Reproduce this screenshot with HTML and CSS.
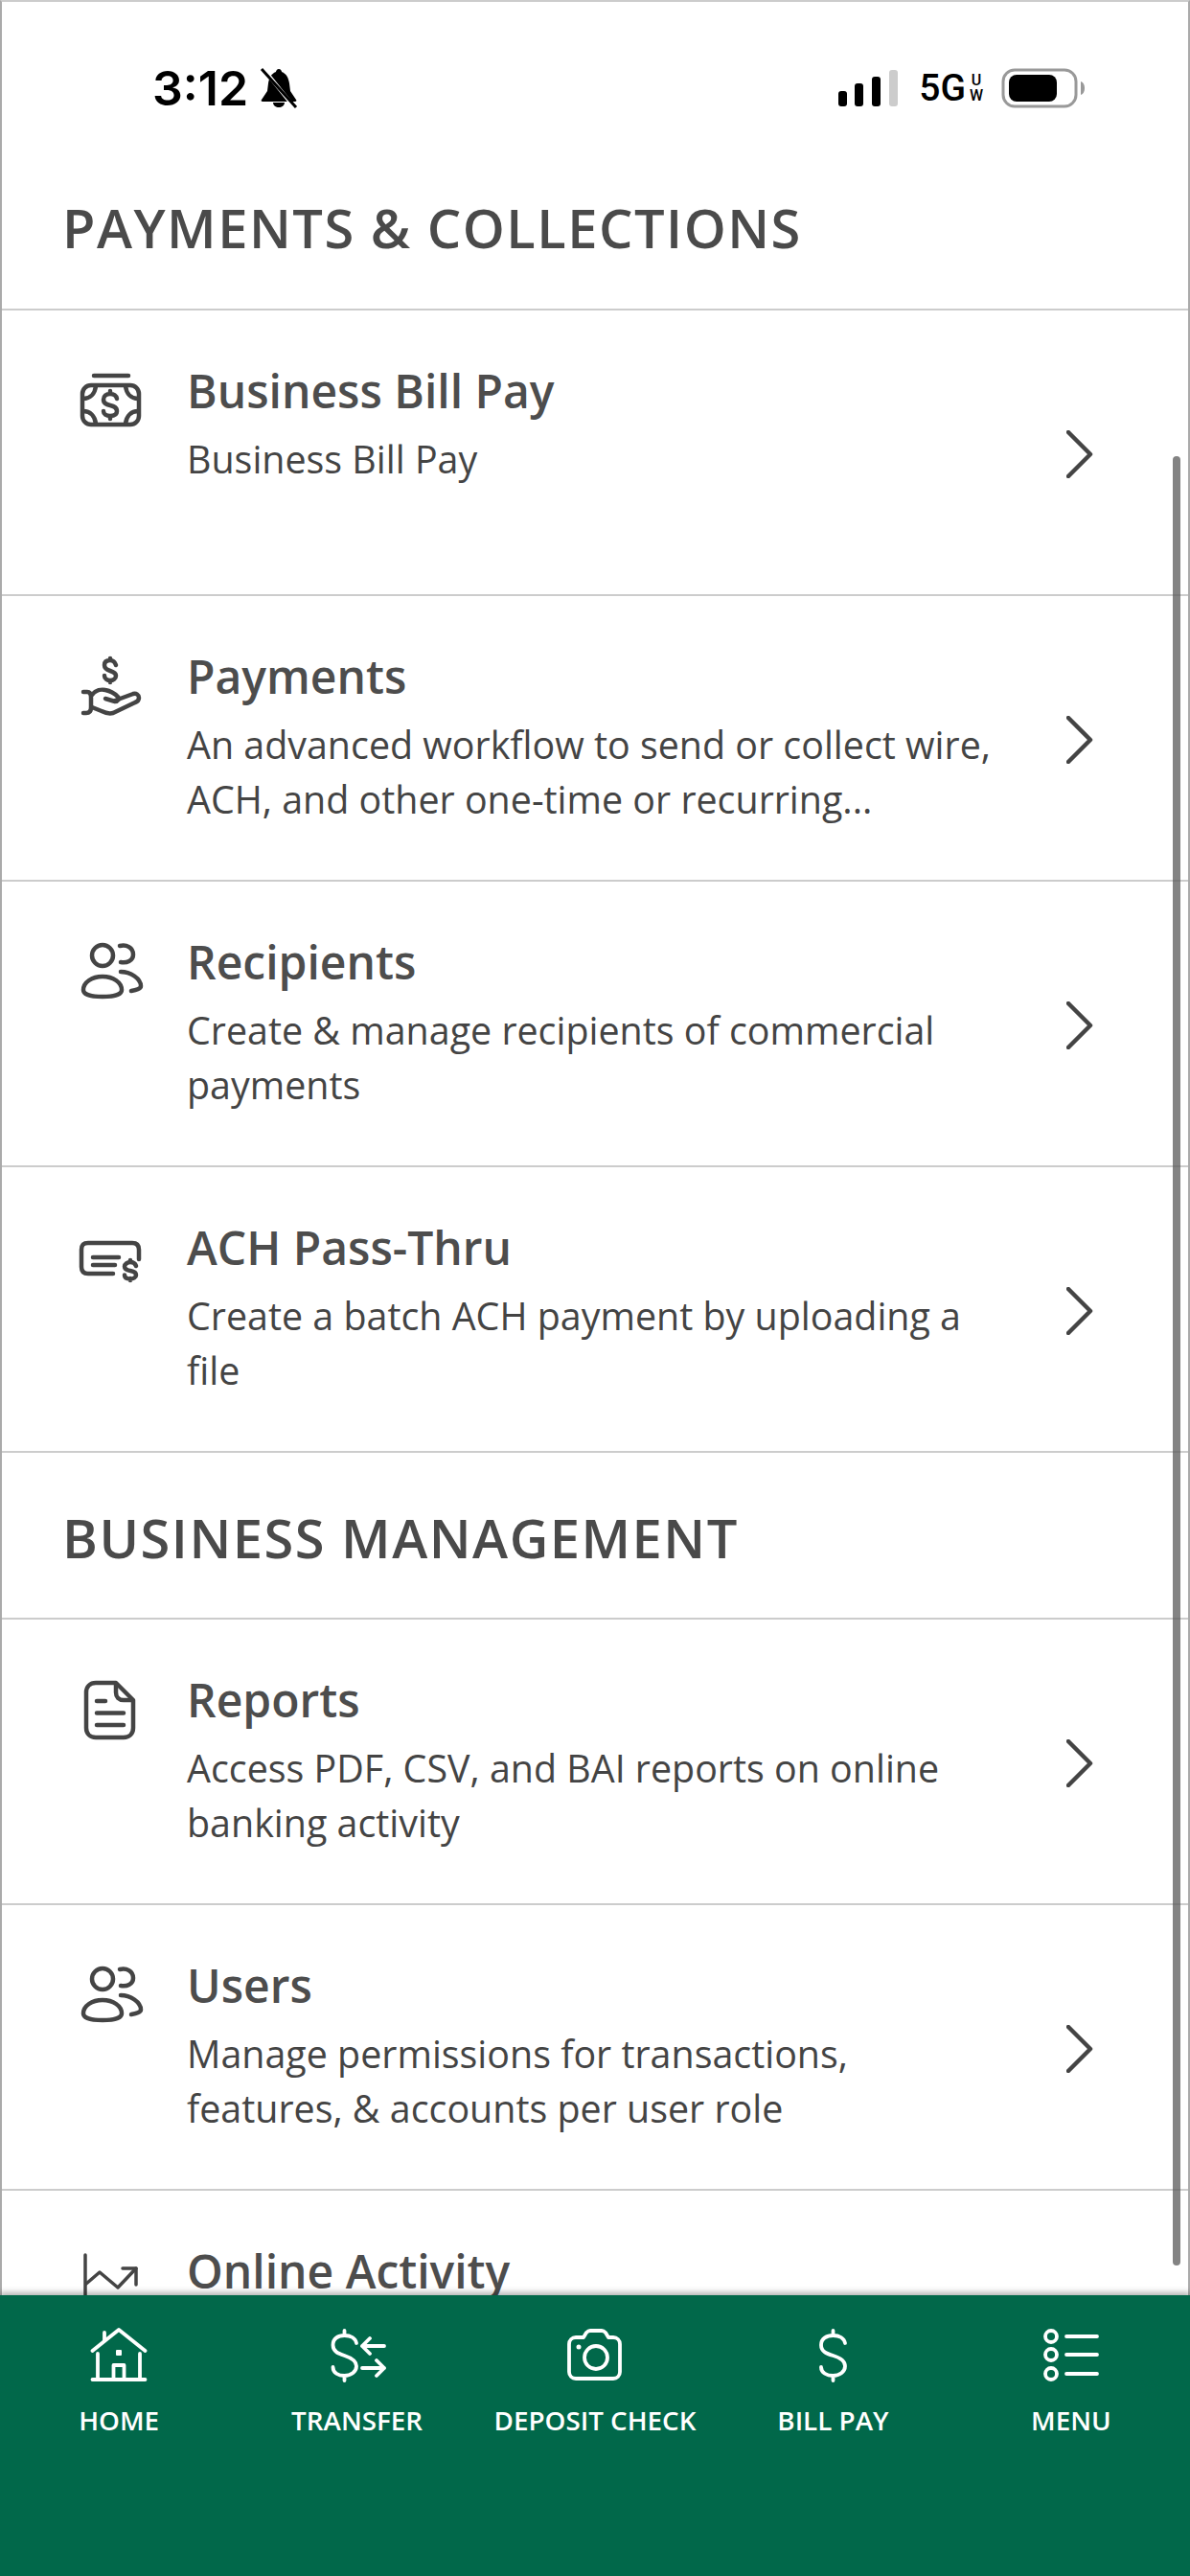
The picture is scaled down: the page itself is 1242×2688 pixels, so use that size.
FILE: index.html
```html
<!DOCTYPE html>
<html lang="en">
<head>
    <meta charset="UTF-8">
    <meta name="viewport" content="width=device-width, initial-scale=1.0">
    <title>Menu</title>
    <link rel="stylesheet" href="styles.css">
</head>
<body>
    <div class="page">
        <div class="content">
            <div class="status-bar">
                <div class="status-left">
                    <span class="time">3:12</span>
                    <svg class="bell" viewBox="0 0 42 42">
                        <path class="solid" d="M21 1c-2 0-3 2-3 3-5 2-7 6-8 12l-1 8-6 9c-1 1 0 2 1 2h34c1 0 2-1 1-2l-6-9-1-8c-1-6-3-10-8-12 0-1-1-3-3-3z"/>
                        <path class="solid" d="M15 36c0 3 3 5 6 5s6-2 6-5z"/>
                        <path class="bell-gap" d="M5 1l33 41"/>
                        <path class="bell-slash" d="M3 1l36 40"/>
                    </svg>
                </div>
                <div class="status-right">
                    <svg class="signal" viewBox="0 0 62 38">
                        <rect class="solid" x="0" y="22" width="9" height="16" rx="3"/>
                        <rect class="solid" x="17" y="14" width="9" height="24" rx="3"/>
                        <rect class="solid" x="35" y="7" width="9" height="31" rx="3"/>
                        <rect class="faint" x="53" y="0" width="9" height="38" rx="3"/>
                    </svg>
                    <span class="network">5G</span>
                    <span class="network-sub">U<br>W</span>
                    <svg class="battery" viewBox="0 0 88 42">
                        <rect x="2" y="2" width="76" height="38" rx="12" fill="none" stroke="#999" stroke-width="3"/>
                        <rect class="solid" x="8" y="7" width="50" height="28" rx="8"/>
                        <path d="M83 14c3 1 4 4 4 7s-1 6-4 7z" fill="#999"/>
                    </svg>
                </div>
            </div>

            <h2 class="section-title first">PAYMENTS &amp; COLLECTIONS</h2>

            <div class="row">
                <svg class="row-icon" viewBox="0 0 130 120">
                    <path d="M48 31h36"/>
                    <rect x="36" y="41" width="59" height="41" rx="9"/>
                    <path d="M37 55c7 0 12-5 13-13M81 42c1 8 6 13 13 13M37 68c7 0 12 5 13 13M81 81c1-8 6-13 13-13"/>
                    <path d="M72 55c-1-4-4-5-7-5-4 0-7 2-7 6s3 5 7 6 7 2 7 6-3 5-7 5-7-2-7-5M65 47v3M65 73v3"/>
                </svg>
                <div class="row-text">
                    <div class="row-title">Business Bill Pay</div>
                    <div class="row-desc">Business Bill Pay</div>
                </div>
                <svg class="chevron" viewBox="0 0 28 50"><path d="M2 2l23 23L2 48"/></svg>
            </div>

            <div class="row">
                <svg class="row-icon" viewBox="0 -2 130 120">
                    <path d="M71 33c-1-3-3-5-6-5-4 0-6 2-6 5s3 5 6 6 6 2 6 5-3 5-6 5-6-2-6-5M65 26v2M65 49v2"/>
                    <path d="M37 61h4c3 0 4 3 4 6v10c0 4-2 6-5 6h-3"/>
                    <path d="M46 64c4-5 10-6 14-5 5 1 10 4 13 7 2 2 0 5-3 5l-10-3"/>
                    <path d="M70 70l19-7c3-1 6 1 6 4 0 2-1 4-4 5L68 83c-4 1-8 0-12-2l-10-4"/>
                </svg>
                <div class="row-text">
                    <div class="row-title">Payments</div>
                    <div class="row-desc">An advanced workflow to send or collect wire, ACH, and other one-time or recurring...</div>
                </div>
                <svg class="chevron" viewBox="0 0 28 50"><path d="M2 2l23 23L2 48"/></svg>
            </div>

            <div class="row">
                <svg class="row-icon" viewBox="0 -4 130 120">
                    <circle cx="57" cy="36" r="11"/>
                    <path d="M75 26c7-2 14 2 14 9 0 7-7 9-13 8"/>
                    <path d="M37 72c0-8 9-14 20-14 11 0 20 6 20 14 0 5-9 7-20 7s-20-2-20-7z"/>
                    <path d="M76 53c10 0 21 7 21 15 0 3-5 4-10 5"/>
                </svg>
                <div class="row-text">
                    <div class="row-title">Recipients</div>
                    <div class="row-desc">Create &amp; manage recipients of commercial payments</div>
                </div>
                <svg class="chevron" viewBox="0 0 28 50"><path d="M2 2l23 23L2 48"/></svg>
            </div>

            <div class="row">
                <svg class="row-icon" viewBox="0 -6 130 120">
                    <path d="M68 68H42c-5 0-7-3-7-7V43c0-5 2-7 7-7h46c4 0 7 2 7 7v10"/>
                    <path d="M47 51h27M47 59h23"/>
                    <path d="M92 60c-1-3-3-4-6-4-3 0-6 2-6 4.500s3 4 6 4.500 6 2 6 4.500-3 4-6 4-6-1-6-4M86 54v2M86 73v2"/>
                </svg>
                <div class="row-text">
                    <div class="row-title">ACH Pass-Thru</div>
                    <div class="row-desc">Create a batch ACH payment by uploading a file</div>
                </div>
                <svg class="chevron" viewBox="0 0 28 50"><path d="M2 2l23 23L2 48"/></svg>
            </div>

            <h2 class="section-title">BUSINESS MANAGEMENT</h2>

            <div class="row">
                <svg class="row-icon" viewBox="0 -4 130 120">
                    <path d="M71 25H50c-6 0-10 4-10 10v37c0 6 4 10 10 10h29c6 0 10-4 10-10V43z"/>
                    <path d="M71 26v9c0 5 3 8 8 8h9"/>
                    <path d="M51 44h9M51 56.500h28M51 69h28"/>
                </svg>
                <div class="row-text">
                    <div class="row-title">Reports</div>
                    <div class="row-desc">Access PDF, CSV, and BAI reports on online banking activity</div>
                </div>
                <svg class="chevron" viewBox="0 0 28 50"><path d="M2 2l23 23L2 48"/></svg>
            </div>

            <div class="row">
                <svg class="row-icon" viewBox="0 -4 130 120">
                    <circle cx="57" cy="36" r="11"/>
                    <path d="M75 26c7-2 14 2 14 9 0 7-7 9-13 8"/>
                    <path d="M37 72c0-8 9-14 20-14 11 0 20 6 20 14 0 5-9 7-20 7s-20-2-20-7z"/>
                    <path d="M76 53c10 0 21 7 21 15 0 3-5 4-10 5"/>
                </svg>
                <div class="row-text">
                    <div class="row-title">Users</div>
                    <div class="row-desc">Manage permissions for transactions, features, &amp; accounts per user role</div>
                </div>
                <svg class="chevron" viewBox="0 0 28 50"><path d="M2 2l23 23L2 48"/></svg>
            </div>

            <div class="row">
                <svg class="row-icon thin" viewBox="0 0 130 120">
                    <path d="M39 30v70"/>
                    <path d="M40 60l14-12 19 16 19-20"/>
                    <path d="M78 44h14v17"/>
                </svg>
                <div class="row-text">
                    <div class="row-title">Online Activity</div>
                </div>
            </div>

            <div class="scrollbar"></div>
        </div>

        <nav class="bottom-nav">
            <a class="nav-item" href="#">
                <svg class="nav-icon" viewBox="0 0 60 60">
                    <path d="M2.500 25L30 3l27.500 22M15 15V6"/>
                    <path d="M8 28v27M52 28v27M2.500 55h55"/>
                    <path d="M24.500 55V40h11v15"/>
                    <rect class="nav-fill" x="27" y="24" width="6" height="6" rx="1"/>
                </svg>
                <span>HOME</span>
            </a>
            <a class="nav-item" href="#">
                <svg class="nav-icon" viewBox="0 0 60 60">
                    <path d="M29 17c-1-5-6-8-12.500-8C10 9 4.500 12 4.500 19s6 9 12 11 12.500 5 12.500 11-6 10-12.500 10S4.500 48 4.500 42M16.500 4v5M16.500 51v5"/>
                    <path d="M58 20H35M43 12l-8 8 8 8M35 43h23M50 35l8 8-8 8"/>
                </svg>
                <span>TRANSFER</span>
            </a>
            <a class="nav-item" href="#">
                <svg class="nav-icon" viewBox="0 0 60 60">
                    <path d="M10 11h8l3-5c1-1 2-2 4-2h12c2 0 3 1 4 2l3 5h5c4 0 7 3 7 7v29c0 4-3 7-7 7H10c-4 0-7-3-7-7V18c0-4 3-7 7-7z"/>
                    <circle cx="31" cy="32" r="12"/>
                    <circle class="nav-fill" cx="13" cy="21" r="2.500"/>
                </svg>
                <span>DEPOSIT CHECK</span>
            </a>
            <a class="nav-item" href="#">
                <svg class="nav-icon" viewBox="0 0 60 60">
                    <path d="M43 17c-1-5-6-8-12.500-8C24 9 18 12 18 19s6 9 12.500 11S43 35 43 41s-6 10-12.500 10S18 48 18 42M30.500 4v5M30.500 51v5"/>
                </svg>
                <span>BILL PAY</span>
            </a>
            <a class="nav-item" href="#">
                <svg class="nav-icon" viewBox="0 0 60 60">
                    <circle cx="9" cy="10" r="6"/>
                    <circle cx="9" cy="29" r="6"/>
                    <circle cx="9" cy="49" r="6"/>
                    <path d="M25 10h32M25 29h32M25 49h32"/>
                </svg>
                <span>MENU</span>
            </a>
        </nav>
    </div>
</body>
</html>
```

FILE: styles.css
```css
/* General Styles */
* {
    box-sizing: border-box;
}

body {
    margin: 0;
    font-family: 'Open Sans', sans-serif;
    background: #fff;
    color: #444;
}

.page {
    display: flex;
    flex-direction: column;
    height: 2688px;
    overflow: hidden;
}

.content {
    position: relative;
    flex: 1;
    min-height: 0;
    overflow: hidden;
    border-top: 2px solid #ccc;
    border-left: 2px solid #aaa;
    border-right: 2px solid #aaa;
}

.solid {
    fill: #000;
}

.faint {
    fill: #ccc;
}

/* Status bar */
.status-bar {
    display: flex;
    justify-content: space-between;
    align-items: center;
    height: 146px;
    padding: 34px 107px 0 157px;
    color: #000;
}

.status-left,
.status-right {
    display: flex;
    align-items: center;
}

.time {
    font-family: 'Inter', sans-serif;
    font-size: 50px;
    font-weight: 600;
    line-height: 56px;
}

.bell {
    width: 42px;
    height: 42px;
    margin-left: 11px;
}

.bell-gap {
    stroke: #fff;
    stroke-width: 4;
    fill: none;
}

.bell-slash {
    stroke: #000;
    stroke-width: 3;
    fill: none;
}

.signal {
    width: 62px;
    height: 38px;
}

.network {
    margin-left: 22px;
    font-family: 'Roboto', sans-serif;
    font-size: 39px;
    font-weight: 500;
    line-height: 40px;
}

.network-sub {
    width: 16px;
    margin-left: 3px;
    font-family: 'Roboto', sans-serif;
    font-size: 16px;
    font-weight: 500;
    line-height: 16px;
    text-align: center;
}

.battery {
    width: 88px;
    height: 42px;
    margin-left: 18px;
}

/* Sections and rows */
.section-title {
    margin: 0;
    height: 174px;
    padding-left: 63px;
    border-bottom: 2px solid #ccc;
    font-size: 56px;
    font-weight: 600;
    line-height: 176px;
    letter-spacing: 1.500px;
    color: #4a4a4a;
}

.section-title.first {
    height: 176px;
    line-height: 178px;
}

.row {
    display: flex;
    align-items: flex-start;
    height: 298px;
    padding-top: 37px;
    padding-right: 99px;
    border-bottom: 2px solid #ccc;
}

.row-icon {
    flex: none;
    width: 130px;
    height: 120px;
    margin-left: 48px;
    fill: none;
    stroke: #444;
    stroke-width: 4.500;
    stroke-linecap: round;
    stroke-linejoin: round;
}

.row-icon.thin {
    stroke-width: 3.500;
}

.row-text {
    flex: 1;
    margin-top: 13px;
    margin-left: 15px;
    padding-right: 60px;
}

.row-title {
    font-size: 48px;
    font-weight: 600;
    line-height: 68px;
    color: #4d4d4d;
}

.row-desc {
    margin-top: 9px;
    font-size: 39.400px;
    line-height: 56.500px;
    color: #444;
}

.chevron {
    flex: none;
    align-self: center;
    width: 28px;
    height: 50px;
    margin-top: -33px;
    fill: none;
    stroke: #444;
    stroke-width: 4.500;
    stroke-linecap: round;
    stroke-linejoin: round;
}

.scrollbar {
    position: absolute;
    top: 474px;
    right: 8px;
    width: 8px;
    height: 1888px;
    border-radius: 4px;
    background: rgba(90, 90, 90, 0.75);
}

/* Bottom navigation */
.bottom-nav {
    position: relative;
    display: grid;
    grid-template-columns: repeat(5, 1fr);
    flex: none;
    height: 293px;
    padding-top: 33px;
    background: #01684a;
    box-shadow: 0 -3px 6px rgba(0, 0, 0, 0.3);
}

.nav-item {
    display: flex;
    flex-direction: column;
    align-items: center;
    color: #fff;
    font-size: 27.800px;
    font-weight: 600;
    line-height: 38px;
    text-decoration: none;
}

.nav-icon {
    width: 60px;
    height: 60px;
    margin-bottom: 18px;
    fill: none;
    stroke: #fff;
    stroke-width: 3.800;
    stroke-linecap: round;
    stroke-linejoin: round;
}

.nav-fill {
    fill: #fff;
    stroke: none;
}
```
